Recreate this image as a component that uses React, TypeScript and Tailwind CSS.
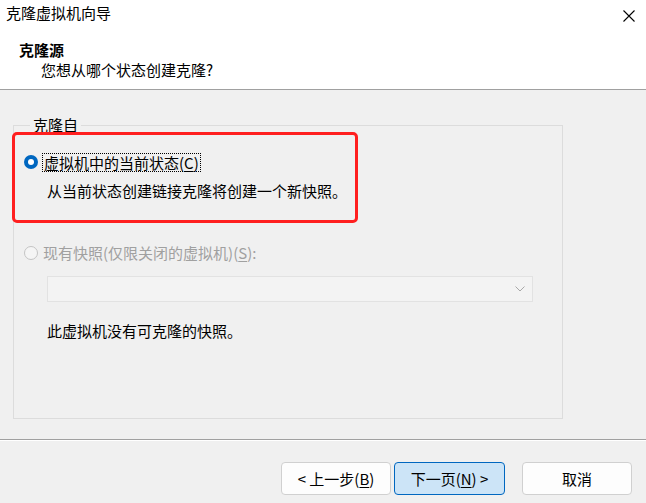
import React from "react";

const font = { fontFamily: '"Microsoft YaHei UI", "Noto Sans CJK SC", "Noto Sans", sans-serif' };

function Mn({ c }: { c: string }) {
  return <span className="underline underline-offset-2">{c}</span>;
}

function Button({ children, primary }: { children: React.ReactNode; primary?: boolean }) {
  return (
    <button
      className={
        primary
          ? "h-[33px] w-[111px] rounded-[4px] border border-[#0067c0] bg-[#cce4f7] text-[15px] leading-5 text-black"
          : "h-[33px] w-[110px] rounded-[4px] border border-[#d0d0d0] bg-[#fdfdfd] text-[15px] leading-5 text-black"
      }
    >
      {children}
    </button>
  );
}

export default function App() {
  return (
    <div className="flex h-[503px] w-[646px] flex-col overflow-hidden bg-[#f0f0f0] text-black" style={font}>
      <header className="h-[90px] border-b border-[#a0a0a0] bg-white">
        <div className="flex h-[20px] items-center justify-between pl-[6px] pr-[11px] mt-[3px]">
          <span className="text-[15px] leading-5">克隆虚拟机向导</span>
          <svg width="12" height="12" viewBox="0 0 12 12" className="mt-[6px]">
            <path d="M0.5 0.5 L11.5 11.5 M11.5 0.5 L0.5 11.5" stroke="#000" strokeWidth="1.1" />
          </svg>
        </div>
        <div className="mt-[17px] pl-[19px] text-[15px] font-bold leading-5">克隆源</div>
        <div className="pl-[41px] text-[15px] leading-5">您想从哪个状态创建克隆?</div>
      </header>

      <fieldset className="ml-[13px] mt-[25px] h-[304px] w-[550px] border border-[#dcdcdc] pl-[10px]">
        <legend className="ml-[6px] px-[3px] text-[15px] leading-5">克隆自</legend>

        <div className="relative mt-[17px]">
          <div className="flex h-[20px] items-center">
            <span className="flex h-[14px] w-[14px] items-center justify-center rounded-full bg-[#0067c0]">
              <span className="h-[6px] w-[6px] rounded-full bg-white" />
            </span>
            <span className="ml-[4px] border border-dotted border-black px-[1px] text-[15px] leading-[17px]">
              虚拟机中的当前状态(<Mn c="C" />)
            </span>
          </div>
          <div className="ml-[23px] mt-[9px] text-[15px] leading-5">从当前状态创建链接克隆将创建一个新快照。</div>
          <div className="absolute left-[-12px] top-[-20px] h-[91px] w-[346px] rounded-[5px] border-[3px] border-[#ff1f1f]" />
        </div>

        <div className="mt-[42px] flex h-[20px] items-center">
          <span className="h-[14px] w-[14px] rounded-full border border-[#c4c4c4] bg-[#f5f5f5]" />
          <span className="ml-[5px] text-[15px] leading-5 text-[#a0a0a0]">
            现有快照(仅限关闭的虚拟机)(<Mn c="S" />):
          </span>
        </div>

        <div className="ml-[23px] mt-[13px] flex h-[26px] w-[486px] items-center justify-end border border-[#e2e2e2] bg-[#f3f3f3] pr-[7px]">
          <svg width="10" height="6" viewBox="0 0 10 6">
            <path d="M0.5 0.5 L5 5 L9.5 0.5" fill="none" stroke="#a8a8a8" strokeWidth="1" />
          </svg>
        </div>

        <div className="ml-[23px] mt-[19px] text-[15px] leading-5">此虚拟机没有可克隆的快照。</div>
      </fieldset>

      <div className="mt-[20px] h-[2px] border-t border-[#a0a0a0] bg-white" />

      <div className="mt-[21px] flex pr-[14px] justify-end">
        <Button>
          &lt; 上一步(<Mn c="B" />)
        </Button>
        <div className="ml-[3px]">
          <Button primary>
            下一页(<Mn c="N" />) &gt;
          </Button>
        </div>
        <div className="ml-[17px]">
          <Button>取消</Button>
        </div>
      </div>
    </div>
  );
}
